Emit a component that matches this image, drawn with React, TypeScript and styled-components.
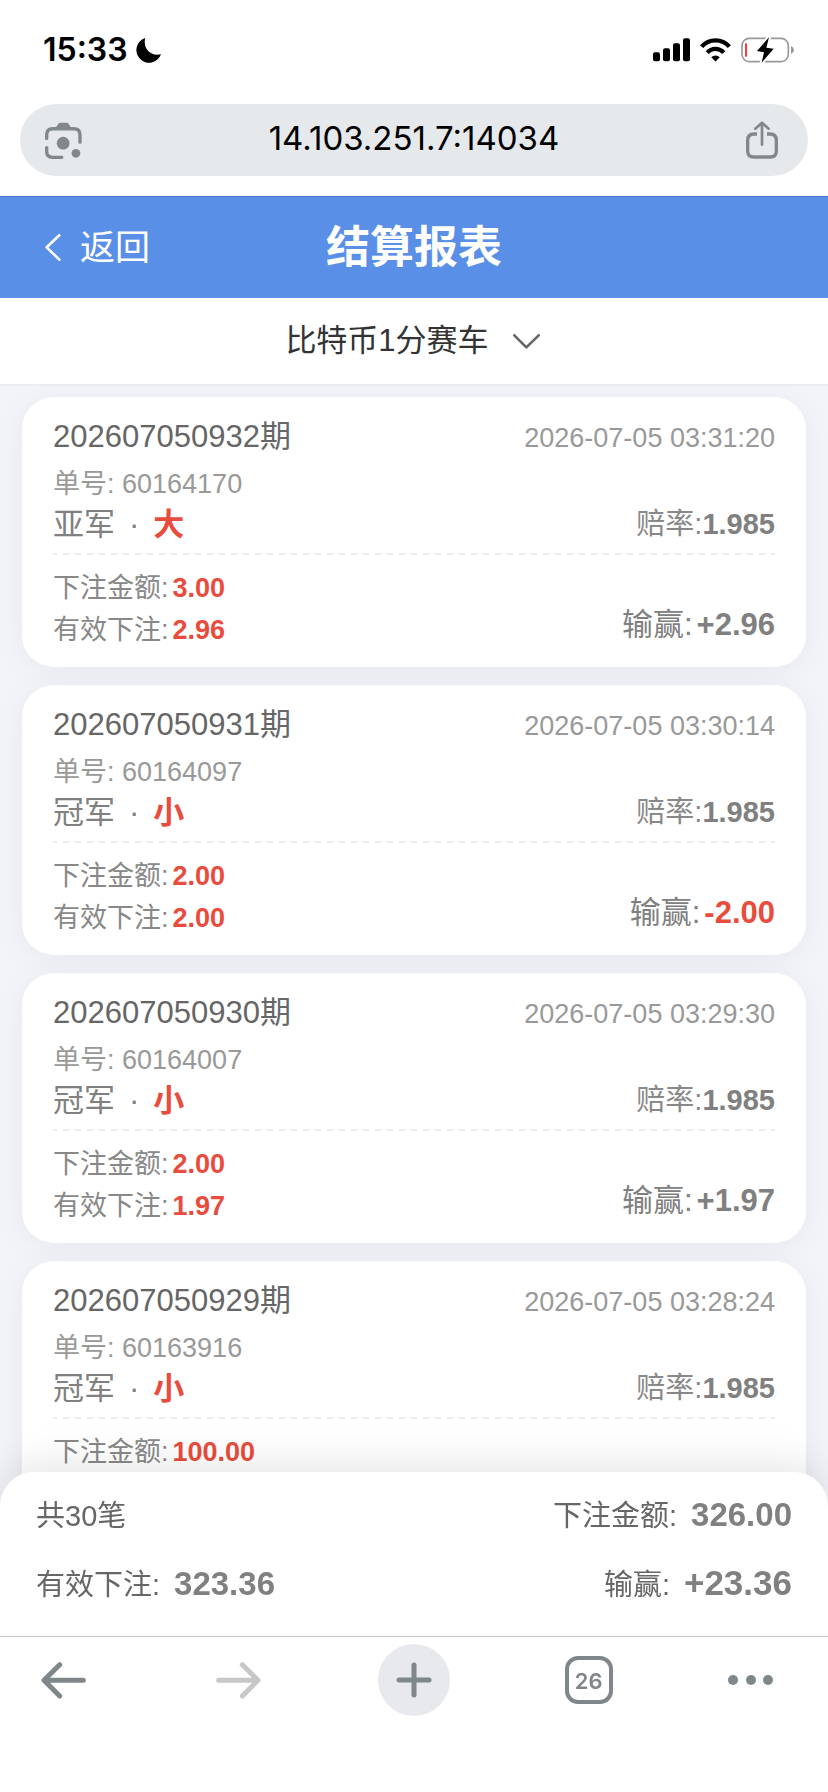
import React from "react";
import styled, { createGlobalStyle } from "styled-components";

const GlobalStyle = createGlobalStyle`
  *, *::before, *::after { box-sizing: border-box; }
  body {
    margin: 0;
    background: #fff;
    font-family: "Liberation Sans", "Noto Sans CJK SC", sans-serif;
  }
  button, input, select { font: inherit; color: inherit; border: 0; background: none; padding: 0; margin: 0; }
  h1, p, ul { margin: 0; padding: 0; }
  svg { display: block; flex: none; }
`;

const Screen = styled.div`
  height: 100vh;
  display: flex;
  flex-direction: column;
  overflow: hidden;
`;

/* ---------- phone status bar ---------- */

const StatusBar = styled.div`
  flex: none;
  height: 100px;
  padding: 0 34px 0 43px;
  display: flex;
  align-items: center;
  justify-content: space-between;
  color: #000;
`;

const StatusGroup = styled.div<{ $gap: number }>`
  display: flex;
  align-items: center;
  gap: ${(p) => p.$gap}px;
`;

const Clock = styled.time`
  font: 600 32px/40px Inter, sans-serif;
`;

/* ---------- address bar ---------- */

const AddressBar = styled.div`
  flex: none;
  padding: 4px 20px 20px;
`;

const AddressField = styled.div`
  height: 72px;
  padding: 0 30px 0 25px;
  border-radius: 36px;
  background: #e5e9ec;
  color: #80888b;
  display: flex;
  align-items: center;
  justify-content: space-between;
`;

const AddressInput = styled.input`
  flex: 1;
  min-width: 0;
  padding-bottom: 4px;
  color: #000;
  font: 400 33px/44px Inter, sans-serif;
  text-align: center;
  outline: none;
`;

const IconButton = styled.button`
  flex: none;
  display: flex;
  cursor: pointer;
`;

/* ---------- page header ---------- */

const Header = styled.header`
  flex: none;
  height: 102px;
  padding: 0 45px;
  border-top: 1px solid #4576c5;
  background: #598fe7;
  color: #fff;
  display: grid;
  grid-template-columns: 1fr auto 1fr;
  align-items: center;
`;

const BackButton = styled.button`
  justify-self: start;
  display: flex;
  align-items: center;
  gap: 19px;
  font-size: 35px;
  line-height: 48px;
  cursor: pointer;
`;

const Title = styled.h1`
  font-size: 44px;
  line-height: 60px;
  font-weight: 700;
`;

const GameBar = styled.div`
  flex: none;
  height: 88px;
  border-bottom: 2px solid #ececee;
  background: #fff;
  display: flex;
  justify-content: center;
  align-items: center;
`;

const GamePicker = styled.label`
  position: relative;
  display: flex;
  align-items: center;
  color: #666;

  svg {
    position: absolute;
    right: 3px;
    pointer-events: none;
  }
`;

const GameSelect = styled.select`
  appearance: none;
  field-sizing: content;
  padding-right: 54px;
  color: #333;
  font-size: 31px;
  line-height: 44px;
  outline: none;
`;

/* ---------- records ---------- */

const Records = styled.main`
  flex: 1;
  min-height: 0;
  overflow-y: auto;
  scrollbar-width: none;
  background: #f2f4f9;
  padding: 11px 22px 0;
`;

const RecordList = styled.ul`
  list-style: none;
  display: grid;
  gap: 18px;
`;

const Card = styled.li`
  padding: 21px 31px 16px;
  border-radius: 32px;
  background: #fff;
  box-shadow: 0 4px 32px rgba(20, 20, 40, 0.05);
`;

const Line = styled.div`
  height: 38px;
  display: flex;
  align-items: center;
  justify-content: space-between;
  line-height: 38px;
`;

const Issue = styled.span`
  font-size: 31px;
  color: #666;
`;

const Time = styled.time`
  padding-top: 2px;
  font-size: 27px;
  color: #999;
`;

const OrderNumber = styled.p`
  height: 32px;
  margin: 12px 0 6px;
  font-size: 27px;
  line-height: 32px;
  color: #999;
`;

const Bet = styled.span`
  display: flex;
  gap: 14px;
  font-size: 31px;
  color: #808080;
`;

const Pick = styled.strong`
  font-weight: 700;
  color: #e94c3d;
`;

const Odds = styled.span`
  padding-bottom: 2px;
  font-size: 29px;
  color: #888;

  strong {
    font-weight: 700;
    color: #808080;
  }
`;

const Divider = styled.hr`
  height: 2px;
  margin: 9px 0 12px;
  border: 0;
  background: repeating-linear-gradient(90deg, #ebebeb 0 6px, transparent 6px 12px);
  background-position: -2px 0;
`;

const Amounts = styled.div`
  display: flex;
  align-items: flex-end;
  justify-content: space-between;
`;

const Amount = styled.p`
  height: 42px;
  font-size: 27px;
  line-height: 42px;
  color: #888;
  display: flex;
  gap: 4px;
`;

const Profit = styled.p<{ $loss: boolean }>`
  padding-bottom: 5px;
  font-size: 31px;
  line-height: 42px;
  color: #808080;
  display: flex;
  gap: 4px;

  strong {
    font-weight: 700;
    color: ${(p) => (p.$loss ? "#e94c3d" : "#808080")};
  }
`;

/* ---------- totals ---------- */

const Totals = styled.section`
  flex: none;
  position: relative;
  margin-top: -34px;
  height: 164px;
  padding: 21px 36px 0;
  border-radius: 34px 34px 0 0;
  background: #fff;
  box-shadow: 0 -8px 40px rgba(0, 0, 0, 0.1);
`;

const TotalsRow = styled.div`
  display: flex;
  align-items: baseline;
  justify-content: space-between;
  height: 68px;
  line-height: 44px;
`;

const Total = styled.p<{ $size: number }>`
  display: flex;
  align-items: baseline;
  gap: 14px;
  font-size: 29px;
  color: #666;

  strong {
    font-size: ${(p) => p.$size}px;
    font-weight: 700;
    color: #808080;
  }
`;

/* ---------- browser toolbar ---------- */

const Toolbar = styled.nav`
  flex: none;
  position: relative;
  height: 156px;
  padding: 7px 28px 0 27px;
  border-top: 1px solid #c8c8ca;
  background: #fff;
  color: #7f878a;
  display: flex;
  align-items: flex-start;
  justify-content: space-between;
`;

const ToolButton = styled.button<{ $filled?: boolean; $align?: string }>`
  width: 72px;
  height: 72px;
  border-radius: 50%;
  background: ${(p) => (p.$filled ? "#e8e9ed" : "transparent")};
  display: flex;
  align-items: center;
  justify-content: ${(p) => p.$align ?? "center"};
  cursor: pointer;

  &:disabled {
    color: #c7c7c7;
  }
`;

const TabCount = styled.span`
  width: 48px;
  height: 48px;
  border: 4px solid currentColor;
  border-radius: 13px;
  font: 600 22px/42px Inter, sans-serif;
  text-align: center;
`;

/* ---------- icons ---------- */

const MoonIcon = () => (
  <svg width="25" height="25" viewBox="0 0 75 75" fill="currentColor" aria-hidden="true">
    <path d="M28 0C20 25 38 57 75 49A38 38 0 1 1 28 0Z" />
  </svg>
);

const SignalIcon = () => (
  <svg width="37" height="24" viewBox="0 0 111 72" fill="currentColor" aria-hidden="true">
    <rect x="0" y="43" width="21" height="27" rx="6" />
    <rect x="30" y="31" width="21" height="39" rx="6" />
    <rect x="60" y="16" width="21" height="54" rx="6" />
    <rect x="90" y="1" width="21" height="69" rx="6" />
  </svg>
);

const WifiIcon = () => (
  <svg width="31" height="24" viewBox="0 0 94 72" fill="none" stroke="currentColor" aria-hidden="true">
    <path d="M5 26A56 56 0 0 1 89 26" strokeWidth="13" />
    <path d="M22 44A33 33 0 0 1 72 44" strokeWidth="13" />
    <path d="M47 71L34 58A19 19 0 0 1 60 58Z" fill="currentColor" stroke="none" />
  </svg>
);

const BatteryIcon = () => (
  <svg width="53" height="26" viewBox="0 0 159 78" fill="none" aria-hidden="true">
    <rect x="3" y="4" width="139" height="70" rx="22" stroke="#999" strokeWidth="5" />
    <path d="M150 27Q159 31 159 39Q159 47 150 51Z" fill="#999" />
    <rect x="12" y="19" width="6" height="40" fill="#fb3b3b" />
    <path
      d="M84 1L48 42L69 46L62 77L98 35L76 32Z"
      fill="#000"
      stroke="#fff"
      strokeWidth="12"
      strokeLinejoin="round"
      paintOrder="stroke"
    />
  </svg>
);

const LensIcon = () => (
  <svg width="37" height="37" viewBox="0 0 110 110" fill="none" stroke="currentColor" strokeWidth="10" strokeLinecap="round" aria-hidden="true">
    <path d="M5 49V38Q5 20 23 20H86Q104 20 104 38V60" />
    <path d="M5 76V88Q5 105 22 105H50" />
    <path d="M31 18L40 5Q42 2 46 2H64Q68 2 70 5L78 18Z" fill="currentColor" stroke="none" />
    <circle cx="54" cy="63" r="19" fill="currentColor" stroke="none" />
    <circle cx="92" cy="93" r="13" fill="currentColor" stroke="none" />
  </svg>
);

const ShareIcon = () => (
  <svg width="32" height="38" viewBox="0 0 96 114" fill="none" stroke="currentColor" strokeWidth="10" aria-hidden="true">
    <path d="M33 39H24Q5 39 5 58V90Q5 108 23 108H73Q91 108 91 90V58Q91 39 72 39H63" />
    <path d="M48 71V7M28 23L48 5L68 23" strokeWidth="8" strokeLinecap="round" strokeLinejoin="round" />
  </svg>
);

const ChevronLeft = () => (
  <svg width="16" height="27" viewBox="0 0 48 81" fill="none" stroke="currentColor" strokeWidth="8" strokeLinecap="round" strokeLinejoin="round" aria-hidden="true">
    <path d="M43 4L5 40L43 77" />
  </svg>
);

const ChevronDown = () => (
  <svg width="27" height="15" viewBox="0 0 81 45" fill="none" stroke="currentColor" strokeWidth="8" strokeLinecap="round" strokeLinejoin="round" aria-hidden="true">
    <path d="M4 4L40 40L77 4" />
  </svg>
);

const ArrowIcon = ({ forward = false }: { forward?: boolean }) => (
  <svg width="45" height="37" viewBox="0 0 135 111" fill="none" stroke="currentColor" strokeWidth="15" strokeLinecap="round" strokeLinejoin="round" aria-hidden="true">
    <path d={forward ? "M8 55H125M79 8L126 55L79 102" : "M127 55H10M56 8L9 55L56 102"} />
  </svg>
);

const PlusIcon = () => (
  <svg width="36" height="36" viewBox="0 0 36 36" stroke="currentColor" strokeWidth="5" strokeLinecap="round" aria-hidden="true">
    <path d="M18 3V33M3 18H33" />
  </svg>
);

const DotsIcon = () => (
  <svg width="46" height="10" viewBox="0 0 46 10" fill="currentColor" aria-hidden="true">
    <circle cx="5" cy="5" r="5" />
    <circle cx="23" cy="5" r="5" />
    <circle cx="40" cy="5" r="5" />
  </svg>
);

/* ---------- data ---------- */

interface BetRecord {
  issue: string;
  time: string;
  order: string;
  place: string;
  pick: string;
  odds: string;
  stake: string;
  valid: string;
  profit: string;
}

const records: BetRecord[] = [
  { issue: "202607050932", time: "2026-07-05 03:31:20", order: "60164170", place: "亚军", pick: "大", odds: "1.985", stake: "3.00", valid: "2.96", profit: "+2.96" },
  { issue: "202607050931", time: "2026-07-05 03:30:14", order: "60164097", place: "冠军", pick: "小", odds: "1.985", stake: "2.00", valid: "2.00", profit: "-2.00" },
  { issue: "202607050930", time: "2026-07-05 03:29:30", order: "60164007", place: "冠军", pick: "小", odds: "1.985", stake: "2.00", valid: "1.97", profit: "+1.97" },
  { issue: "202607050929", time: "2026-07-05 03:28:24", order: "60163916", place: "冠军", pick: "小", odds: "1.985", stake: "100.00", valid: "98.50", profit: "+98.50" },
];

const RecordCard = ({ record }: { record: BetRecord }) => (
  <Card>
    <Line>
      <Issue>{record.issue}期</Issue>
      <Time>{record.time}</Time>
    </Line>
    <OrderNumber>单号: {record.order}</OrderNumber>
    <Line>
      <Bet>
        <span>{record.place}</span>
        <span>·</span>
        <Pick>{record.pick}</Pick>
      </Bet>
      <Odds>
        赔率:<strong>{record.odds}</strong>
      </Odds>
    </Line>
    <Divider />
    <Amounts>
      <div>
        <Amount>
          下注金额:<Pick>{record.stake}</Pick>
        </Amount>
        <Amount>
          有效下注:<Pick>{record.valid}</Pick>
        </Amount>
      </div>
      <Profit $loss={record.profit.startsWith("-")}>
        输赢:<strong>{record.profit}</strong>
      </Profit>
    </Amounts>
  </Card>
);

export default function App() {
  return (
    <Screen lang="zh-CN">
      <GlobalStyle />
      <StatusBar>
        <StatusGroup $gap={8}>
          <Clock>15:33</Clock>
          <MoonIcon />
        </StatusGroup>
        <StatusGroup $gap={10}>
          <SignalIcon />
          <WifiIcon />
          <BatteryIcon />
        </StatusGroup>
      </StatusBar>
      <AddressBar>
        <AddressField>
          <IconButton type="button" aria-label="智能镜头">
            <LensIcon />
          </IconButton>
          <AddressInput type="text" aria-label="网址" defaultValue="14.103.251.7:14034" />
          <IconButton type="button" aria-label="分享">
            <ShareIcon />
          </IconButton>
        </AddressField>
      </AddressBar>

      <Header>
        <BackButton type="button">
          <ChevronLeft />
          返回
        </BackButton>
        <Title>结算报表</Title>
      </Header>
      <GameBar>
        <GamePicker>
          <GameSelect aria-label="彩种">
            <option>比特币1分赛车</option>
          </GameSelect>
          <ChevronDown />
        </GamePicker>
      </GameBar>

      <Records>
        <RecordList>
          {records.map((record) => (
            <RecordCard key={record.issue} record={record} />
          ))}
        </RecordList>
      </Records>

      <Totals>
        <TotalsRow>
          <Total $size={33}>共30笔</Total>
          <Total $size={33}>
            下注金额:<strong>326.00</strong>
          </Total>
        </TotalsRow>
        <TotalsRow>
          <Total $size={33}>
            有效下注:<strong>323.36</strong>
          </Total>
          <Total $size={35}>
            输赢:<strong>+23.36</strong>
          </Total>
        </TotalsRow>
      </Totals>

      <Toolbar>
        <ToolButton type="button" aria-label="后退">
          <ArrowIcon />
        </ToolButton>
        <ToolButton type="button" aria-label="前进" disabled>
          <ArrowIcon forward />
        </ToolButton>
        <ToolButton type="button" aria-label="新标签页" $filled>
          <PlusIcon />
        </ToolButton>
        <ToolButton type="button" aria-label="标签页">
          <TabCount>26</TabCount>
        </ToolButton>
        <ToolButton type="button" aria-label="更多" $align="flex-start">
          <DotsIcon />
        </ToolButton>
      </Toolbar>
    </Screen>
  );
}
